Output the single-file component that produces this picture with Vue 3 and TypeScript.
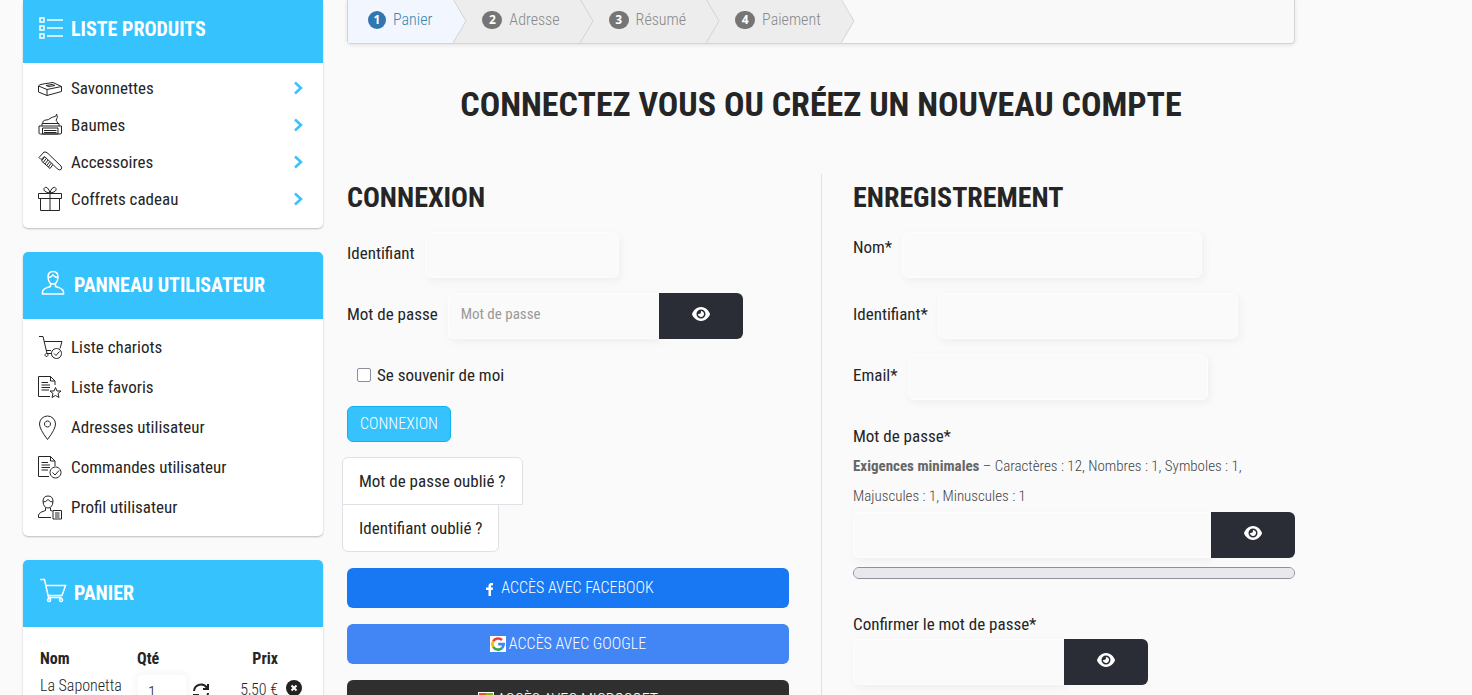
<script setup lang="ts">
import { ref } from 'vue'

type Entry = { label: string; icon: string }

const products: Entry[] = [
  { label: 'Savonnettes', icon: 'soap' },
  { label: 'Baumes', icon: 'balm' },
  { label: 'Accessoires', icon: 'comb' },
  { label: 'Coffrets cadeau', icon: 'gift' },
]

const account: Entry[] = [
  { label: 'Liste chariots', icon: 'cartcheck' },
  { label: 'Liste favoris', icon: 'docstar' },
  { label: 'Adresses utilisateur', icon: 'pin' },
  { label: 'Commandes utilisateur', icon: 'doccheck' },
  { label: 'Profil utilisateur', icon: 'profile' },
]

const icons: Record<string, string> = {
  soap: 'M.5 11L9 14.500V20.500L.5 17ZM9 14.500L23.500 11.500V16.500L9 20.500M.5 11Q1 9.500 5 9L15 7.500L23.500 11.500M8 10.500L14 9.500L17 10.500L11 11.500Z',
  balm: 'M4 14V11.500H21V14M5 11.500Q4 8.500 8 8Q10.500 8 12 6.500Q14 5 17 4.500Q18.500 4 18.500 2Q20.500 5.500 18 8.500Q20 9.500 19.500 11.500M1 14H23.500V21Q23.500 22 22 22H2.500Q1 22 1 21ZM4.500 16H20V22H4.500ZM6 18.500H18.500M6 20.500H18.500',
  comb: 'M1 8.500L6 3Q8 2.500 10 4.500L23 17Q24.500 19 23 20.500Q21.500 21.500 19.500 20L15 15.500L6.500 7.500L3 10.500ZM6.500 8L3.500 12M8.200 9.500L5.200 13.500M10 11L7 15M11.700 12.600L8.700 16.600M13.400 14L10.400 18M15 15.500L12 19.500M3.500 12L12 19.500',
  gift: 'M.5 7.500H23.500V12.500H.5ZM2.500 12.500V24.500H21.500V12.500M12 7.500V24.500M12 7Q5 6 6 2.500Q7 0 9.500 2Q11.500 4 12 7Q12.500 4 14.500 2Q17 0 18 2.500Q19 6 12 7',
  cartcheck: 'M1 1.500H5L9 18.500H14M6.200 6.500H24L22 13.500M8 15.500H13M8.500 18.500A1.500 1.500 0 1 0 8.510 18.500M18.500 13.500A5 5 0 1 0 18.510 13.500M16 18.500L18 20.500L21.500 16.500',
  docstar: 'M12 21.500H.5V1.500H12.500L17 6V10M12.500 1.500V6H17M3.500 7.500H10M3.500 10H12M3.500 12.500H12M3.500 15H11M17.500 12.500L19 16H23L20 18.500L21 22.500L17.500 20.500L14 22.500L15 18.500L12 16H16Z',
  pin: 'M9.500 24.500Q1.500 14 1.500 9A8 8 0 0 1 17.500 9Q17.500 14 9.500 24.500ZM9.500 6A3 3 0 1 0 9.510 6',
  doccheck: 'M11 21.500H.5V1.500H12.500L17 6V11M12.500 1.500V6H17M3.500 7.500H10M3.500 10H12M3.500 12.500H12M3.500 15H10M17.500 12A5.500 5.500 0 1 0 17.510 12M14.500 17.500L17 20L21 15.500',
  profile: 'M13 22.500H.5V20Q1 17 7.500 15.500V13M12.500 13V15.500L14.500 16M10 1Q5 1 5 6.500Q5.500 13 10 13Q14.500 13 15 6.500Q15 1 10 1ZM5 7Q8 7 10 4.500Q12 7 15 7M15 15.500H23.500V24H15ZM17 18H21.500M17 20H21.500M17 22H21.500',
}

const steps = ['Panier', 'Adresse', 'Résumé', 'Paiement']
const eye =
  'M288 32c-81 0-146 37-193 81C48 156 17 208 3 244c-3 8-3 17 0 25 14 35 45 87 92 131 47 44 112 80 193 80s146-37 193-80c47-44 78-96 93-131 3-8 3-17 0-25-15-36-46-88-93-131C434 69 369 32 288 32zM144 256a144 144 0 1 1 288 0 144 144 0 1 1-288 0zm144-64c0 35-29 64-64 64-7 0-14-1-20-3-6-2-12 2-12 7 0 7 1 14 3 21 14 51 66 82 118 68s82-66 68-118c-11-42-48-69-89-71-6 0-9 6-7 12 2 6 3 13 3 20z'

const qty = ref('1')
const login = ref('')
const password = ref('')
const remember = ref(false)
const name = ref('')
const username = ref('')
const email = ref('')
const newPassword = ref('')
const confirmPassword = ref('')
const showPassword = ref(false)
const showNew = ref(false)
const showConfirm = ref(false)
</script>

<template>
  <div class="page">
    <div class="layout">
      <aside class="sidebar">
        <section class="card">
          <header class="card-head first">
            <svg class="head-icon" viewBox="0 0 26 26" aria-hidden="true">
              <path d="M2 2h4v4H2zM2 10h4v4H2zM2 18h4v4H2zM9 4h16M9 12h16M9 20h16" />
            </svg>
            <h3>Liste produits</h3>
          </header>
          <nav class="menu products">
            <a v-for="item in products" :key="item.label" href="#">
              <svg class="line-icon" viewBox="0 0 25 25" aria-hidden="true"><path :d="icons[item.icon]" /></svg>
              <span>{{ item.label }}</span>
              <svg class="chevron" viewBox="0 0 10 14" aria-hidden="true"><path d="M2 1.500l6 5.500-6 5.500" /></svg>
            </a>
          </nav>
        </section>

        <section class="card">
          <header class="card-head">
            <svg class="head-icon" viewBox="0 0 26 26" aria-hidden="true">
              <path d="M13 -.5q-5 0-5 5.500 .5 7 5 7t5-7q0-5.500-5-5.500zM8 5.500q3 0 5-2.500 2 2.500 5 2.500M10.500 11.500v3q-8 2-8 5.500v2h21v-2q0-3.500-8-5.500v-3" />
            </svg>
            <h3>Panneau utilisateur</h3>
          </header>
          <nav class="menu">
            <a v-for="item in account" :key="item.label" href="#">
              <svg class="line-icon" viewBox="0 0 25 25" aria-hidden="true"><path :d="icons[item.icon]" /></svg>
              <span>{{ item.label }}</span>
            </a>
          </nav>
        </section>

        <section class="card">
          <header class="card-head">
            <svg class="head-icon" viewBox="0 0 26 26" aria-hidden="true">
              <path d="M0 -.5h4.500l4 18h13M6 5.500h19.500l-3.500 10H8M9 18.500a1.500 1.500 0 1 0 .1 0M21 18.500a1.500 1.500 0 1 0 .1 0" />
            </svg>
            <h3>Panier</h3>
          </header>
          <table class="cart">
            <thead>
              <tr>
                <th class="c-name">Nom</th>
                <th class="c-qty">Qté</th>
                <th class="c-price">Prix</th>
                <th class="c-del"></th>
              </tr>
            </thead>
            <tbody>
              <tr>
                <td>La Saponetta</td>
                <td>
                  <div class="qty">
                    <input v-model="qty" aria-label="Quantité" />
                    <button type="button" aria-label="Actualiser">
                      <svg width="18" height="18" viewBox="0 0 18 18" fill="none" stroke="#222" stroke-width="2" aria-hidden="true">
                        <path d="M2 8a7 7 0 0 1 13-3M16 1v5h-5M16 10a7 7 0 0 1-13 3M2 17v-5h5" />
                      </svg>
                    </button>
                  </div>
                </td>
                <td class="c-price">5,50 €</td>
                <td>
                  <button type="button" aria-label="Supprimer">
                    <svg width="16" height="16" viewBox="0 0 16 16" aria-hidden="true">
                      <circle cx="8" cy="8" r="8" fill="#222" />
                      <path d="M5.500 5.500l5 5M10.500 5.500l-5 5" stroke="#fff" stroke-width="2" />
                    </svg>
                  </button>
                </td>
              </tr>
            </tbody>
          </table>
        </section>
      </aside>

      <main>
        <ol class="steps">
          <li v-for="(step, i) in steps" :key="step" :class="{ active: i === 0 }">
            <span class="badge">{{ i + 1 }}</span>
            <span>{{ step }}</span>
            <svg class="arrow" viewBox="0 0 14 43" preserveAspectRatio="none" aria-hidden="true">
              <path :class="{ on: i === 0 }" class="arrow-left" d="M0 0L13 21L0 43Z" />
              <path class="arrow-line" d="M0 -1L13 21L0 43" />
            </svg>
          </li>
        </ol>

        <h1>Connectez vous ou créez un nouveau compte</h1>

        <div class="columns">
          <section class="col">
            <h2>Connexion</h2>
            <form @submit.prevent>
              <div class="row">
                <label for="login">Identifiant</label>
                <input id="login" v-model="login" class="field short" type="text" />
              </div>
              <div class="row">
                <label for="password">Mot de passe</label>
                <div class="group">
                  <input id="password" v-model="password" class="field" :type="showPassword ? 'text' : 'password'" placeholder="Mot de passe" />
                  <button class="reveal" type="button" aria-label="Afficher le mot de passe" @click="showPassword = !showPassword">
                    <svg viewBox="0 0 576 512" aria-hidden="true"><path :d="eye" fill-rule="evenodd" /></svg>
                  </button>
                </div>
              </div>
              <div class="row remember">
                <input id="remember" v-model="remember" type="checkbox" />
                <label for="remember">Se souvenir de moi</label>
              </div>
              <button class="submit" type="submit">Connexion</button>
            </form>
            <ul class="help">
              <li><a href="#">Mot de passe oublié ?</a></li>
              <li><a href="#">Identifiant oublié ?</a></li>
            </ul>
            <div class="social">
              <button class="facebook" type="button">
                <svg width="16" height="16" viewBox="0 0 16 16" aria-hidden="true">
                  <path fill="#fff" d="M6.500 16V10H4V7.500h2.500V6Q6.500 3 9.500 3H11v2.300H10Q9 5.300 9 6.300v1.200h2L10.700 10H9v6z" />
                </svg>
                <span>Accès avec Facebook</span>
              </button>
              <button class="google" type="button">
                <svg width="16" height="16" viewBox="0 0 16 16" aria-hidden="true">
                  <path fill="#fff" d="M0 0h16v16H0z" />
                  <g fill="none" stroke-width="2.600">
                    <path stroke="#ea4335" d="M3.200 5.300A5.700 5.700 0 0 1 12 4" />
                    <path stroke="#fbbc05" d="M3.200 5.300a5.700 5.700 0 0 0 0 5.600" />
                    <path stroke="#34a853" d="M3.200 10.900a5.700 5.700 0 0 0 8.600 1.300" />
                    <path stroke="#4285f4" d="M11.800 12.200Q13.700 10.500 13.700 8.100H8.200" />
                  </g>
                </svg>
                <span>Accès avec Google</span>
              </button>
              <button class="microsoft" type="button">
                <svg width="16" height="16" viewBox="0 0 16 16" aria-hidden="true">
                  <path fill="#fff" d="M0 0h16v16H0z" />
                  <path fill="#f25022" d="M1 1h7v7H1z" />
                  <path fill="#7fba00" d="M8 1h7v7H8z" />
                  <path fill="#00a4ef" d="M1 8h7v7H1z" />
                  <path fill="#ffb900" d="M8 8h7v7H8z" />
                </svg>
                <span>Accès avec Microsoft</span>
              </button>
            </div>
          </section>

          <section class="col">
            <h2>Enregistrement</h2>
            <form @submit.prevent>
              <div class="row top">
                <label for="name">Nom*</label>
                <input id="name" v-model="name" class="field" type="text" />
              </div>
              <div class="row">
                <label for="username">Identifiant*</label>
                <input id="username" v-model="username" class="field" type="text" />
              </div>
              <div class="row">
                <label for="email">Email*</label>
                <input id="email" v-model="email" class="field" type="email" />
              </div>
              <div class="block">
                <label for="new-password">Mot de passe*</label>
                <p class="rules">
                  <strong>Exigences minimales</strong> – Caractères : 12, Nombres : 1, Symboles : 1, Majuscules : 1, Minuscules : 1
                </p>
                <div class="group wide">
                  <input id="new-password" v-model="newPassword" class="field" :type="showNew ? 'text' : 'password'" />
                  <button class="reveal" type="button" aria-label="Afficher le mot de passe" @click="showNew = !showNew">
                    <svg viewBox="0 0 576 512" aria-hidden="true"><path :d="eye" fill-rule="evenodd" /></svg>
                  </button>
                </div>
                <meter class="strength" min="0" max="100" value="0" aria-label="Force du mot de passe"></meter>
              </div>
              <div class="block">
                <label for="confirm-password">Confirmer le mot de passe*</label>
                <div class="group">
                  <input id="confirm-password" v-model="confirmPassword" class="field" :type="showConfirm ? 'text' : 'password'" />
                  <button class="reveal" type="button" aria-label="Afficher le mot de passe" @click="showConfirm = !showConfirm">
                    <svg viewBox="0 0 576 512" aria-hidden="true"><path :d="eye" fill-rule="evenodd" /></svg>
                  </button>
                </div>
              </div>
            </form>
          </section>
        </div>
      </main>
    </div>
  </div>
</template>

<style>
body {
  margin: 0;
  background: #fafafa;
}
</style>

<style scoped>
.page {
  height: 100vh;
  overflow: hidden;
  background: #fafafa;
  color: #252525;
  font-family: "Roboto Condensed", "Liberation Sans Narrow", Roboto, sans-serif;
  font-size: 17px;
  line-height: 30px;
}
.page *,
.page *::before {
  box-sizing: border-box;
}
input,
button {
  font: inherit;
  color: inherit;
}
button {
  border: 0;
  padding: 0;
  background: none;
  cursor: pointer;
}
a {
  color: inherit;
  text-decoration: none;
}
h1,
h2,
h3 {
  margin: 0;
  text-transform: uppercase;
  font-weight: 700;
}
.layout {
  display: grid;
  grid-template-columns: 300px minmax(0, 1fr);
  gap: 24px;
  max-width: 1272px;
  margin-left: 23px;
}
.sidebar {
  display: flex;
  flex-direction: column;
  gap: 24px;
}
.card {
  background: #fff;
  border-radius: 5px;
  box-shadow: 0 1px 2px rgba(0, 0, 0, 0.25);
}
.card-head {
  display: flex;
  align-items: center;
  gap: 8px;
  height: 67px;
  padding: 0 0 2px 17px;
  border-radius: 5px 5px 0 0;
  background: #36c2fd;
  color: #fff;
}
.card-head.first {
  height: 63px;
  padding: 0 0 6px 15px;
  gap: 7px;
  border-radius: 0;
}
.card-head h3 {
  font-size: 20px;
  line-height: 30px;
}
.head-icon {
  width: 26px;
  height: 26px;
  overflow: visible;
  fill: none;
  stroke: #fff;
  stroke-width: 1.500;
}
.menu {
  padding: 8px 20px 9px 15px;
}
.menu.products {
  padding: 6px 20px 11px 15px;
}
.menu a {
  display: flex;
  align-items: center;
  gap: 8px;
  height: 40px;
}
.menu.products a {
  height: 37px;
}
.line-icon {
  width: 25px;
  height: 25px;
  fill: none;
  stroke: #252525;
  stroke-width: 1;
}
.chevron {
  width: 10px;
  height: 14px;
  margin-left: auto;
  fill: none;
  stroke: #36c2fd;
  stroke-width: 2.500;
}
.cart {
  width: 100%;
  padding: 17px 17px 16px;
  border-collapse: separate;
  border-spacing: 0;
  table-layout: fixed;
  line-height: 24px;
  font-size: 16px;
}
.cart td {
  font-weight: 300;
}
.cart th,
.cart td {
  padding: 3px 0 0;
  text-align: left;
  vertical-align: top;
  white-space: nowrap;
}
.cart .c-name {
  width: 97px;
}
.cart .c-qty {
  width: 80px;
}
.cart .c-price {
  text-align: right;
}
.cart .c-del {
  width: 28px;
}
.cart td:last-child {
  padding: 9px 0 0 8px;
  line-height: 16px;
}
.cart td.c-price {
  padding-top: 7px;
}
.qty {
  display: flex;
  align-items: center;
  gap: 5px;
}
.qty input {
  width: 50px;
  height: 36px;
  padding: 0 10px;
  border: 1px solid #fafafa;
  border-radius: 4px;
  background: #fff;
  box-shadow: 0 0 10px rgba(0, 0, 0, 0.06);
}
.qty svg {
  display: block;
}

.steps {
  display: flex;
  height: 44px;
  margin: 0;
  padding: 0;
  list-style: none;
  border: 1px solid #d4d4d4;
  border-top: 0;
  border-radius: 0 0 4px 4px;
  background: #f9f9f9;
  box-shadow: 0 1px 4px rgba(0, 0, 0, 0.1);
  font-size: 16px;
  font-weight: 300;
  color: #888;
}
.steps li {
  position: relative;
  display: flex;
  align-items: center;
  gap: 7px;
  padding: 0 20px 4px 29px;
  background: #ededed;
}
.steps li.active {
  padding: 0 21px 4px 20px;
  background: #f1f6ff;
  color: #3a87ad;
}
.badge {
  width: 20px;
  height: 18px;
  border-radius: 9px;
  background: #757575;
  color: #fff;
  font: 700 12px/18px "Open Sans", sans-serif;
  text-align: center;
}
.active .badge {
  width: 18px;
  background: #3276b1;
}
/* The pointed end of each step lies over the start of the next one. */
.arrow {
  position: absolute;
  top: 0;
  left: 100%;
  z-index: 1;
  width: 14px;
  height: 100%;
}
.arrow-left {
  fill: #ededed;
}
.arrow-left.on {
  fill: #f1f6ff;
}
.arrow-line {
  fill: none;
  stroke: #d4d4d4;
}

h1 {
  padding: 30px 0 40px;
  font-size: 34px;
  line-height: 60px;
  text-align: center;
}
.columns {
  display: grid;
  grid-template-columns: repeat(2, minmax(0, 1fr));
}
.col {
  padding-right: 32px;
}
.col + .col {
  padding: 0 0 0 31px;
  border-left: 1px solid #e0e0e0;
}
h2 {
  margin-bottom: 10px;
  font-size: 28px;
  line-height: 48px;
}
.row {
  display: flex;
  align-items: center;
  gap: 10px;
  margin-bottom: 15px;
  min-height: 46px;
}
.row label {
  padding-bottom: 5px;
}
.row.top label {
  align-self: flex-start;
}
.field {
  width: 300px;
  height: 46px;
  padding: 0 12px 4px;
  border: 1px solid #fdfdfd;
  border-radius: 6px;
  background: #fafafa;
  box-shadow: 2px 3px 10px rgba(0, 0, 0, 0.05);
  font-size: 15px;
}
.field.short {
  width: 194px;
}
.field::placeholder {
  color: #999;
}
.group {
  display: flex;
}
.group .field {
  width: 211px;
  border-right: 0;
  border-radius: 6px 0 0 6px;
}
.group.wide .field {
  flex: 1;
  width: auto;
  min-width: 0;
}
.reveal {
  width: 84px;
  height: 46px;
  padding-bottom: 4px;
  border-radius: 0 6px 6px 0;
  background: #2b2d36;
}
.reveal svg {
  display: block;
  width: 18px;
  height: 16px;
  margin: 0 auto;
  fill: #fff;
}
.row.remember {
  gap: 6px;
  min-height: 42px;
  margin-bottom: 10px;
  padding-left: 10px;
}
.row.remember label {
  padding-bottom: 0;
}
.remember input {
  appearance: none;
  width: 14px;
  height: 14px;
  margin: 0;
  border: 1px solid #8f8f9d;
  border-radius: 2px;
  background: #fff;
}
.remember input:checked {
  background: #36c2fd;
}
.submit {
  display: block;
  min-width: 104px;
  height: 36px;
  padding: 0 11px;
  border: 1px solid #10b2f5;
  border-radius: 6px;
  background: #36c2fd;
  color: #fff;
  font-size: 16px;
  font-weight: 300;
  text-transform: uppercase;
}
.help {
  display: flex;
  flex-direction: column;
  align-items: flex-start;
  margin: 15px 0 16px -5px;
  padding: 0;
  list-style: none;
}
.help li {
  padding: 8px 16px;
  border: 1px solid #dfe1e6;
  border-radius: 6px 6px 0 0;
  background: #fff;
}
.help li + li {
  margin-top: -1px;
  border-radius: 0 0 6px 6px;
}
.help a {
  display: block;
}
.social {
  display: flex;
  flex-direction: column;
  gap: 16px;
}
.social button {
  display: flex;
  align-items: center;
  justify-content: center;
  gap: 3px;
  height: 40px;
  border-radius: 6px;
  color: #fff;
  font-size: 16px;
  font-weight: 300;
  text-transform: uppercase;
}
.social .facebook {
  background: #1877f2;
}
.social .google {
  background: #4285f4;
}
.social .microsoft {
  background: #2f2f2f;
}
.block {
  margin-bottom: 30px;
}
.block label {
  display: block;
}
.row + .block {
  padding-top: 6px;
}
.rules {
  margin: 0 0 1px;
  font-size: 15px;
  font-weight: 300;
  color: #444;
}
.rules strong {
  font-weight: 700;
  color: #666;
}
.strength {
  appearance: none;
  display: block;
  width: 100%;
  height: 12px;
  margin-top: 9px;
  border: 1px solid #8f8f9d;
  border-radius: 6px;
  background: #e9e9ed;
}
.strength::-webkit-meter-bar {
  height: 10px;
  border: 0;
  background: #e9e9ed;
  border-radius: 5px;
}
</style>
